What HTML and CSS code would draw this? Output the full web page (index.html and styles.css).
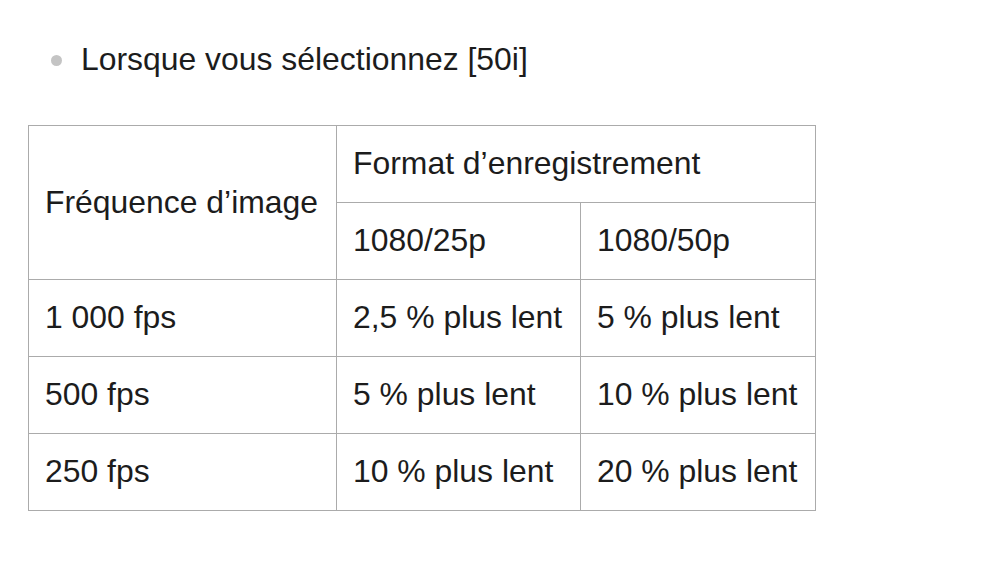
FILE: index.html
```html
<!DOCTYPE html>
<html lang="fr">
<head>
<meta charset="utf-8">
<link rel="stylesheet" href="styles.css">
</head>
<body>
<div class="page">
  <ul class="list">
    <li class="item"><span class="dot"></span><span>Lorsque vous sélectionnez [50i]</span></li>
  </ul>
  <table class="grid">
    <colgroup>
      <col class="c1">
      <col class="c2">
      <col class="c3">
    </colgroup>
    <tr>
      <td rowspan="2">Fréquence d’image</td>
      <td colspan="2">Format d’enregistrement</td>
    </tr>
    <tr>
      <td>1080/25p</td>
      <td>1080/50p</td>
    </tr>
    <tr>
      <td>1 000 fps</td>
      <td>2,5 % plus lent</td>
      <td>5 % plus lent</td>
    </tr>
    <tr>
      <td>500 fps</td>
      <td>5 % plus lent</td>
      <td>10 % plus lent</td>
    </tr>
    <tr>
      <td>250 fps</td>
      <td>10 % plus lent</td>
      <td>20 % plus lent</td>
    </tr>
  </table>
</div>
</body>
</html>
```

FILE: styles.css
```css
html, body {
  margin: 0;
  padding: 0;
  background: #ffffff;
}
body {
  font-family: "Liberation Sans", Arial, sans-serif;
  font-size: 31.9px;
  color: #1c1c1c;
  width: 1000px;
  height: 563px;
  overflow: hidden;
}
.page {
  padding: 41px 0 0 28px;
}
.list {
  list-style: none;
  margin: 0;
  padding: 0 0 0 23px;
}
.item {
  display: flex;
  align-items: center;
  gap: 19px;
  line-height: 36px;
  white-space: nowrap;
}
.dot {
  width: 11px;
  height: 11px;
  border-radius: 50%;
  background: #c4c4c4;
  flex: none;
  margin-top: 2px;
}
.grid {
  margin-top: 48px;
  border-collapse: collapse;
  table-layout: fixed;
  width: 787px;
}
.c1 { width: 308px; }
.c2 { width: 244px; }
.c3 { width: 235px; }
.grid td {
  border: 1px solid #ababab;
  height: 74px;
  padding: 0 0 2px 16px;
  vertical-align: middle;
  white-space: nowrap;
  line-height: 36px;
}
```
